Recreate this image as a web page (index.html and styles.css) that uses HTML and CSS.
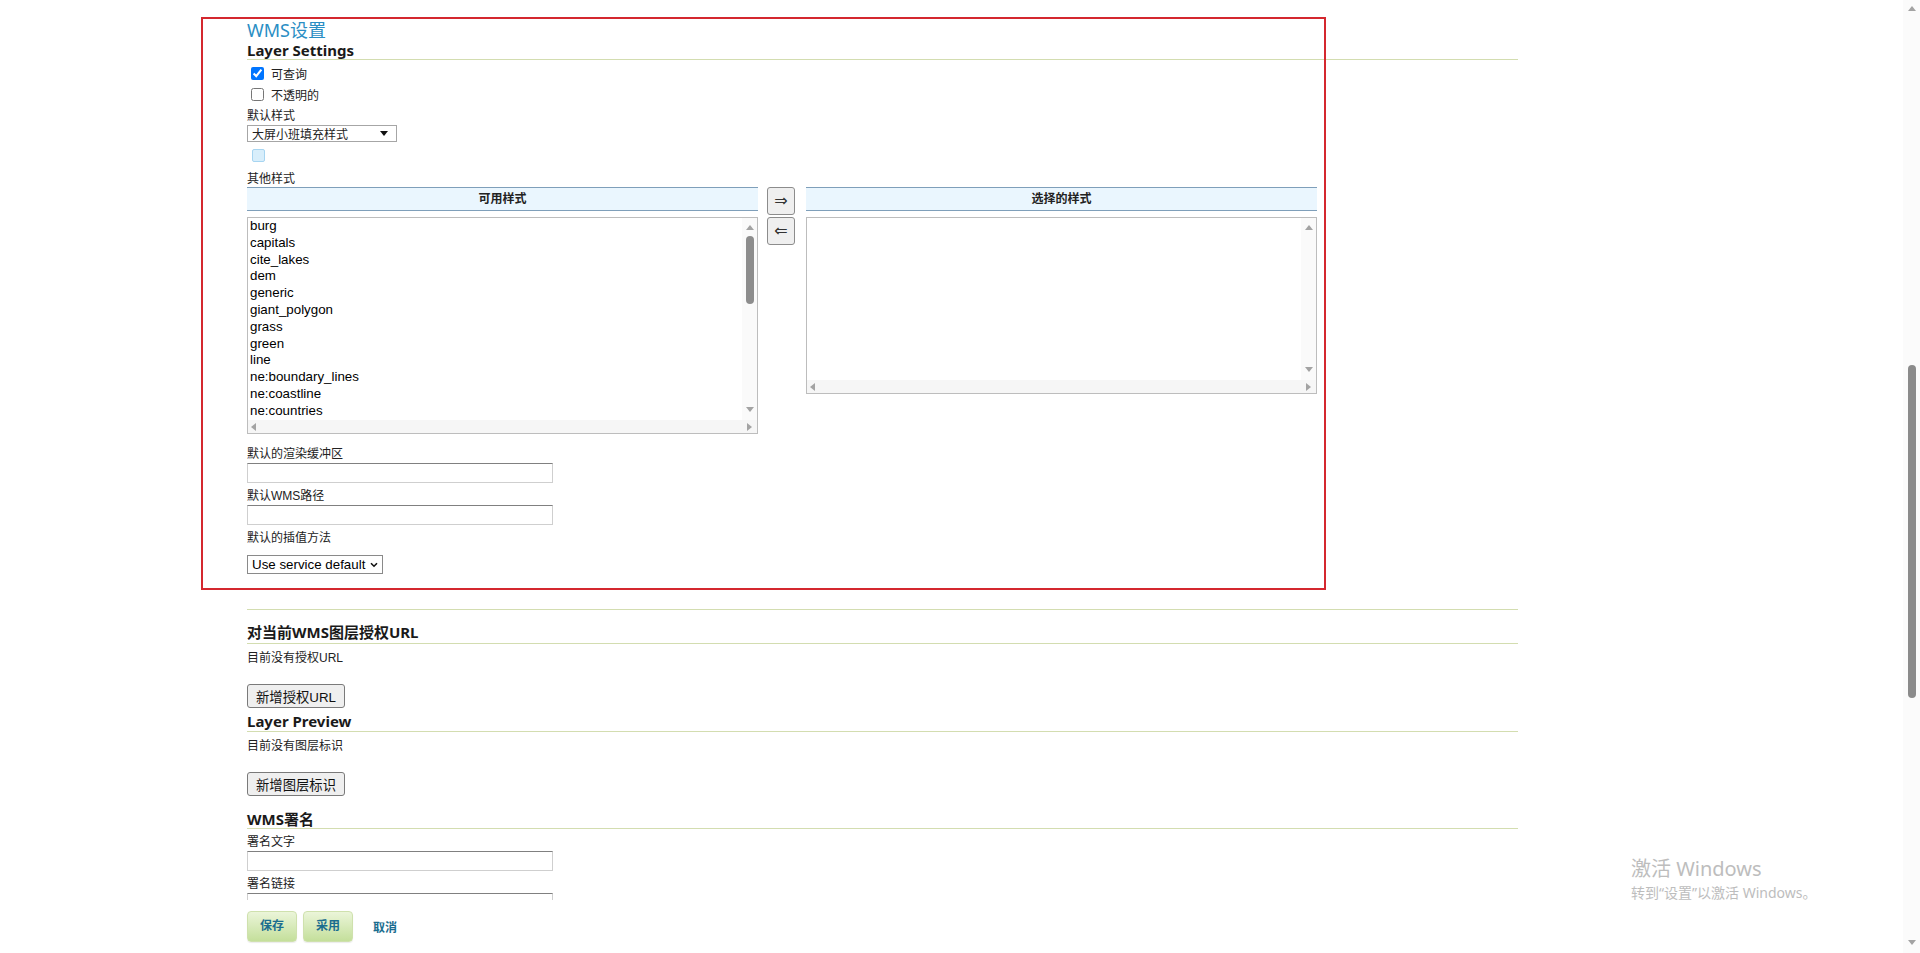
FILE: index.html
```html
<!DOCTYPE html>
<html lang="zh-CN">
<head>
  <meta charset="UTF-8" />
  <title>WMS设置</title>
  <link rel="stylesheet" href="styles.css">
</head>
<body>
  <div class="page">
    <div class="scroll-area">
      <div class="main">
        <h2 class="wms-title">WMS设置</h2>
        <h3 class="section-title">Layer Settings</h3>

        <label class="check-row"><input type="checkbox" checked> 可查询</label>
        <label class="check-row"><input type="checkbox"> 不透明的</label>

        <div class="field-label first">默认样式</div>
        <div class="select-box">
          <span>大屏小班填充样式</span>
          <span class="caret"></span>
        </div>
        <div class="legend-box"></div>

        <div class="field-label other">其他样式</div>
        <div class="palette">
          <div class="palette-col">
            <div class="palette-head">可用样式</div>
            <div class="listbox tall">
              <div class="list-items">
                <div>burg</div>
                <div>capitals</div>
                <div>cite_lakes</div>
                <div>dem</div>
                <div>generic</div>
                <div>giant_polygon</div>
                <div>grass</div>
                <div>green</div>
                <div>line</div>
                <div>ne:boundary_lines</div>
                <div>ne:coastline</div>
                <div>ne:countries</div>
              </div>
              <div class="vscroll">
                <span class="arr-up"></span>
                <span class="thumb"></span>
                <span class="spacer"></span>
                <span class="arr-down"></span>
              </div>
              <div class="hscroll">
                <span class="arr-left"></span>
                <span class="arr-right"></span>
              </div>
            </div>
          </div>
          <div class="palette-buttons">
            <button class="move-btn">&rArr;</button>
            <button class="move-btn">&lArr;</button>
          </div>
          <div class="palette-col">
            <div class="palette-head">选择的样式</div>
            <div class="listbox short">
              <div class="list-items"></div>
              <div class="vscroll">
                <span class="arr-up"></span>
                <span class="spacer"></span>
                <span class="arr-down"></span>
              </div>
              <div class="hscroll">
                <span class="arr-left"></span>
                <span class="arr-right"></span>
              </div>
            </div>
          </div>
        </div>

        <div class="field-label gap12">默认的渲染缓冲区</div>
        <input class="text-input" type="text">
        <div class="field-label">默认WMS路径</div>
        <input class="text-input" type="text">
        <div class="field-label">默认的插值方法</div>
        <div class="native-select">
          <span>Use service default</span>
          <svg width="8" height="6" viewBox="0 0 8 6"><path d="M1 1.2 L4 4.2 L7 1.2" fill="none" stroke="#111" stroke-width="1.6"/></svg>
        </div>

        <div class="section-end"></div>

        <h3 class="section-title auth">对当前WMS图层授权URL</h3>
        <div class="note">目前没有授权URL</div>
        <button class="plain-btn">新增授权URL</button>

        <h3 class="section-title preview">Layer Preview</h3>
        <div class="note">目前没有图层标识</div>
        <button class="plain-btn">新增图层标识</button>

        <h3 class="section-title attribution">WMS署名</h3>
        <div class="field-label">署名文字</div>
        <input class="text-input" type="text">
        <div class="field-label">署名链接</div>
        <input class="text-input" type="text">
      </div>

      <div class="highlight"></div>
    </div>

    <div class="button-bar">
      <button class="green-btn">保存</button>
      <button class="green-btn">采用</button>
      <a class="cancel-link" href="#">取消</a>
    </div>

    <div class="page-scrollbar">
      <span class="arr-up"></span>
      <span class="page-thumb"></span>
      <span class="spacer"></span>
      <span class="arr-down"></span>
    </div>

    <div class="watermark">
      <div class="wm-title">激活 Windows</div>
      <div class="wm-sub">转到“设置”以激活 Windows。</div>
    </div>
  </div>
</body>
</html>
```

FILE: styles.css
```css
body {
  margin: 0;
  padding: 0;
  background: #fff;
  color: #222;
  font-family: "Liberation Sans", "Noto Sans CJK SC", sans-serif;
  font-size: 12px;
}

.page {
  height: 100vh;
  display: flex;
  flex-direction: column;
  position: relative;
  overflow: hidden;
}

.scroll-area {
  height: 900px;
  flex-shrink: 0;
  overflow: hidden;
  position: relative;
}

.main {
  margin-left: 247px;
  width: 1271px;
}

.wms-title {
  margin: 0;
  padding-top: 19px;
  font-family: "Noto Sans", "Noto Sans CJK SC", sans-serif;
  font-size: 18px;
  font-weight: normal;
  line-height: 22px;
  color: #2a8ec4;
}

.section-title {
  margin: 0;
  height: 18px;
  font-family: "Noto Sans", "Noto Sans CJK SC", sans-serif;
  font-size: 15px;
  font-weight: bold;
  line-height: 18px;
  color: #1a1a1a;
  border-bottom: 1px solid #d3ddb0;
}

.section-title.auth { margin-top: 13px; height: 20px; }
.section-title.preview { margin-top: 4px; height: 19px; }
.section-title.attribution { margin-top: 14px; }

.check-row {
  display: flex;
  align-items: center;
  height: 21px;
  font-size: 12px;
}

.check-row:first-of-type {
  margin-top: 3px;
}

.check-row input {
  width: 13px;
  height: 13px;
  margin: 0 7px 0 4px;
}

.field-label {
  margin-top: 5px;
  line-height: 16px;
  font-size: 12px;
}

.field-label.first { margin-top: 3px; }
.field-label.other { margin-top: 9px; }
.field-label.gap12 { margin-top: 12px; }

.select-box {
  margin-top: 1px;
  width: 150px;
  height: 17px;
  box-sizing: border-box;
  border: 1px solid #a6a6a6;
  display: flex;
  align-items: center;
  justify-content: space-between;
  padding: 0 8px 0 4px;
  font-size: 12px;
}

.caret {
  width: 0;
  height: 0;
  border-left: 4px solid transparent;
  border-right: 4px solid transparent;
  border-top: 5px solid #111;
}

.legend-box {
  margin: 7px 0 0 5px;
  width: 13px;
  height: 13px;
  box-sizing: border-box;
  background: #d8eefb;
  border: 1px solid #a7d5f1;
  border-radius: 2px;
}

.palette {
  display: flex;
  align-items: flex-start;
}

.palette-col {
  width: 511px;
  display: flex;
  flex-direction: column;
  gap: 6px;
}

.palette-head {
  height: 24px;
  box-sizing: border-box;
  border-top: 1px solid #7f9fba;
  border-bottom: 1px solid #7f9fba;
  background: #eaf6fe;
  text-align: center;
  font-weight: bold;
  line-height: 22px;
  font-size: 12px;
}

.palette-buttons {
  width: 28px;
  margin: 0 11px 0 9px;
  display: flex;
  flex-direction: column;
  gap: 2px;
}

.move-btn {
  width: 28px;
  height: 28px;
  padding: 0;
  border: 1px solid #8c8c8c;
  border-radius: 3px;
  background: #efefef;
  font-family: "DejaVu Sans", sans-serif;
  font-size: 16px;
  line-height: 1;
  color: #333;
}

.listbox {
  box-sizing: border-box;
  border: 1px solid #bdbdbd;
  display: grid;
  grid-template-columns: 1fr 15px;
  grid-template-rows: 1fr 13px;
}

.listbox.tall { height: 217px; }
.listbox.short { height: 177px; }

.list-items {
  overflow: hidden;
  padding-left: 2px;
  font-size: 13.333px;
  line-height: 16.8px;
  color: #000;
}

.vscroll {
  background: #fafafa;
  display: flex;
  flex-direction: column;
  align-items: center;
  padding: 7px 0 8px;
}

.vscroll .thumb {
  width: 8px;
  height: 68px;
  margin-top: 6px;
  border-radius: 4px;
  background: #8d8d8d;
}

.spacer {
  flex: 1;
}

.hscroll {
  grid-column: 1 / 3;
  background: #f6f6f6;
  display: flex;
  align-items: center;
  justify-content: space-between;
  padding: 0 5px 0 3px;
}

.arr-up,
.arr-down {
  width: 0;
  height: 0;
  border-left: 4px solid transparent;
  border-right: 4px solid transparent;
}

.arr-up { border-bottom: 5px solid #a3a3a3; }
.arr-down { border-top: 5px solid #a3a3a3; }

.arr-left,
.arr-right {
  width: 0;
  height: 0;
  border-top: 4px solid transparent;
  border-bottom: 4px solid transparent;
}

.arr-left { border-right: 5px solid #a3a3a3; }
.arr-right { border-left: 5px solid #a3a3a3; }

.text-input {
  display: block;
  margin: 1px 0 0;
  width: 306px;
  height: 20px;
  box-sizing: border-box;
  border: 1px solid #cfcfcf;
  border-top-color: #808080;
  padding: 0 3px;
  font-size: 12px;
}

.native-select {
  margin-top: 9px;
  width: 136px;
  height: 19px;
  box-sizing: border-box;
  border: 1px solid #8a8a8a;
  display: flex;
  align-items: center;
  justify-content: space-between;
  padding: 0 4px 0 4px;
  font-size: 13.333px;
  color: #000;
}

.section-end {
  margin-top: 35px;
  border-bottom: 1px solid #d3ddb0;
}

.note {
  margin-top: 6px;
  line-height: 16px;
  font-size: 12px;
}

.plain-btn {
  display: block;
  margin-top: 18px;
  height: 24px;
  padding: 0 8px;
  border: 1px solid #7a7a7a;
  border-radius: 3px;
  background: #efefef;
  font-family: "Liberation Sans", "Noto Sans CJK SC", sans-serif;
  font-size: 13.333px;
  color: #111;
}

.highlight {
  position: absolute;
  left: 201px;
  top: 17px;
  width: 1125px;
  height: 573px;
  box-sizing: border-box;
  border: 2px solid #d4282f;
  pointer-events: none;
}

.button-bar {
  padding: 11px 0 0 247px;
  display: flex;
  align-items: center;
  gap: 6px;
}

.green-btn {
  width: 50px;
  height: 31px;
  padding: 0;
  border: 1px solid #cfe1ad;
  border-radius: 4px;
  background: linear-gradient(to bottom, #ebf5d9, #c4df9b);
  box-shadow: 0 1px 1px rgba(0, 0, 0, 0.08);
  font-family: "Liberation Sans", "Noto Sans CJK SC", sans-serif;
  font-size: 12px;
  font-weight: bold;
  line-height: 29px;
  color: #1b6d8f;
}

.cancel-link {
  margin-left: 14px;
  font-size: 12px;
  font-weight: bold;
  color: #1b6d8f;
  text-decoration: none;
}

.page-scrollbar {
  position: absolute;
  top: 0;
  right: 0;
  width: 17px;
  height: 100%;
  background: #fbfbfb;
  display: flex;
  flex-direction: column;
  align-items: center;
  padding: 6px 0 8px;
  box-sizing: border-box;
}

.page-thumb {
  width: 8px;
  height: 333px;
  margin-top: 354px;
  border-radius: 4px;
  background: #8b8b8b;
}

.watermark {
  position: absolute;
  left: 1631px;
  top: 856px;
  font-family: "Noto Sans", "Noto Sans CJK SC", sans-serif;
  color: #bdbdbd;
  pointer-events: none;
}

.wm-title {
  font-size: 20px;
  line-height: 26px;
}

.wm-sub {
  font-size: 14px;
  line-height: 22px;
}
```
